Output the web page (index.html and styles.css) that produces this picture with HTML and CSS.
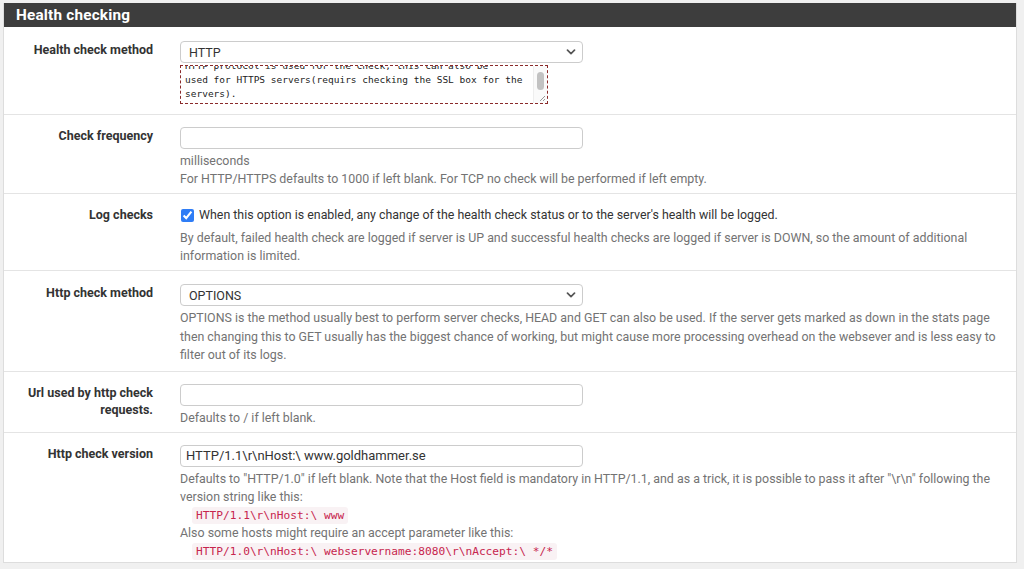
FILE: index.html
```html
<!DOCTYPE html>
<html lang="en">
<head>
  <meta charset="UTF-8">
  <meta name="viewport" content="width=device-width, initial-scale=1">
  <title>Backend - Health checking</title>
  <link rel="stylesheet" href="styles.css">
</head>
<body>
  <div class="panel">
    <div class="panel-heading">Health checking</div>
    <div class="panel-body">

      <div class="form-row first">
        <label class="row-label" for="check-type">Health check method</label>
        <div class="row-control">
          <div class="select-wrap">
            <select id="check-type" class="form-control">
              <option>HTTP</option>
            </select>
            <svg class="chevron" viewBox="0 0 10 6" width="10" height="6"><path d="M1.5 1.2 L5 4.6 L8.5 1.2" fill="none" stroke="#555" stroke-width="1.7" stroke-linecap="round" stroke-linejoin="round"/></svg>
          </div>
          <div class="method-notes">
            <div class="notes-text">HTTP protocol is used for the check, this can also be<br>used for HTTPS servers(requirs checking the SSL box for the servers).</div>
            <div class="notes-scroll"><span class="notes-thumb"></span></div>
            <svg class="notes-grip" viewBox="0 0 8 8" width="8" height="8"><path d="M7 2 L2 7 M7 5 L5 7" stroke="#999" stroke-width="1"/></svg>
          </div>
        </div>
      </div>

      <div class="form-row">
        <label class="row-label" for="check-freq">Check frequency</label>
        <div class="row-control">
          <input id="check-freq" class="form-control" type="text">
          <div class="help-text">milliseconds<br>For HTTP/HTTPS defaults to 1000 if left blank. For TCP no check will be performed if left empty.</div>
        </div>
      </div>

      <div class="form-row">
        <label class="row-label">Log checks</label>
        <div class="row-control">
          <label class="check-line"><input type="checkbox" checked> When this option is enabled, any change of the health check status or to the server's health will be logged.</label>
          <div class="help-text">By default, failed health check are logged if server is UP and successful health checks are logged if server is DOWN, so the amount of additional information is limited.</div>
        </div>
      </div>

      <div class="form-row tall">
        <label class="row-label" for="http-method">Http check method</label>
        <div class="row-control">
          <div class="select-wrap">
            <select id="http-method" class="form-control">
              <option>OPTIONS</option>
            </select>
            <svg class="chevron" viewBox="0 0 10 6" width="10" height="6"><path d="M1.5 1.2 L5 4.6 L8.5 1.2" fill="none" stroke="#555" stroke-width="1.7" stroke-linecap="round" stroke-linejoin="round"/></svg>
          </div>
          <div class="help-text">OPTIONS is the method usually best to perform server checks, HEAD and GET can also be used. If the server gets marked as down in the stats page then changing this to GET usually has the biggest chance of working, but might cause more processing overhead on the websever and is less easy to filter out of its logs.</div>
        </div>
      </div>

      <div class="form-row">
        <label class="row-label" for="check-uri">Url used by http check requests.</label>
        <div class="row-control">
          <input id="check-uri" class="form-control" type="text">
          <div class="help-text">Defaults to / if left blank.</div>
        </div>
      </div>

      <div class="form-row last">
        <label class="row-label" for="http-version">Http check version</label>
        <div class="row-control">
          <input id="http-version" class="form-control" type="text" value="HTTP/1.1\r\nHost:\ www.goldhammer.se">
          <div class="help-text">Defaults to "HTTP/1.0" if left blank. Note that the Host field is mandatory in HTTP/1.1, and as a trick, it is possible to pass it after "\r\n" following the version string like this:<br><code>HTTP/1.1\r\nHost:\ www</code><br>Also some hosts might require an accept parameter like this:<br><code>HTTP/1.0\r\nHost:\ webservername:8080\r\nAccept:\ */*</code></div>
        </div>
      </div>

    </div>
  </div>
</body>
</html>
```

FILE: styles.css
```css
body {
  margin: 0;
  background-color: #f0f0f0;
  font-family: Roboto, "Liberation Sans", Arial, sans-serif;
  font-size: 12.4px;
  color: #333;
}

.panel {
  margin: 3px 7px 6px 3px;
  background-color: #fff;
  border: 1px solid #ddd;
  border-top: none;
}

.panel-heading {
  background-color: #3d3d3d;
  color: #fff;
  font-size: 15.3px;
  font-weight: 700;
  letter-spacing: 0.2px;
  height: 24px;
  line-height: 24px;
  padding-left: 12px;
}

.form-row {
  display: grid;
  grid-template-columns: 149px 1fr;
  column-gap: 27px;
  padding: 12px 13px 5px 0;
  border-bottom: 1px solid #e4e4e4;
}

.form-row.first {
  padding-top: 14px;
}

.form-row.tall {
  padding-top: 13px;
  padding-bottom: 6px;
}

.form-row.last {
  padding-bottom: 2px;
  border-bottom: none;
}

.row-label {
  text-align: right;
  font-size: 12.5px;
  font-weight: 700;
  line-height: 17px;
  color: #333;
}

.form-control {
  display: block;
  box-sizing: border-box;
  width: 403px;
  height: 22px;
  margin: 0;
  padding: 0 5px;
  border: 1px solid #ccc;
  border-radius: 4px;
  background-color: #fff;
  font-family: inherit;
  font-size: 13px;
  color: #333;
}

select.form-control {
  appearance: none;
  -webkit-appearance: none;
  padding-left: 8px;
  font-size: 12.5px;
}

.select-wrap {
  position: relative;
  width: 403px;
}

.chevron {
  position: absolute;
  right: 7px;
  top: 8px;
  pointer-events: none;
}

/* scrolled-down notes box under the method select */
.method-notes {
  position: relative;
  box-sizing: border-box;
  width: 368px;
  height: 39px;
  margin: 2px 0 5px;
  border: 1px dashed #8a2a2a;
  overflow: hidden;
  background-color: #fff;
}

.notes-text {
  margin-top: -7px;
  padding: 0 16px 0 4px;
  font-family: "DejaVu Sans Mono", "Liberation Mono", monospace;
  font-size: 9.5px;
  line-height: 14px;
  color: #222;
}

.notes-scroll {
  position: absolute;
  top: 0;
  right: 0;
  width: 13px;
  height: 100%;
  background-color: #fafafa;
  border-left: 1px solid #eee;
}

.notes-thumb {
  position: absolute;
  left: 3px;
  top: 6px;
  width: 7px;
  height: 18px;
  border-radius: 4px;
  background-color: #c2c2c2;
}

.notes-grip {
  position: absolute;
  right: 1px;
  bottom: 1px;
}

.help-text {
  margin-top: 3px;
  color: #737373;
  line-height: 18px;
}

.form-row.tall .help-text {
  line-height: 18.5px;
}

.check-line {
  display: flex;
  align-items: center;
  line-height: 18px;
  margin-bottom: 5px;
  color: #333;
}

.check-line input {
  width: 13px;
  height: 13px;
  margin: 0 5px 0 1px;
  accent-color: #2f7df6;
}

code {
  display: inline-block;
  margin-left: 12px;
  padding: 0 4px;
  line-height: 17px;
  background-color: #f9f2f4;
  border-radius: 3px;
  color: #c7254e;
  font-family: "DejaVu Sans Mono", "Liberation Mono", monospace;
  font-size: 11.2px;
}
```
